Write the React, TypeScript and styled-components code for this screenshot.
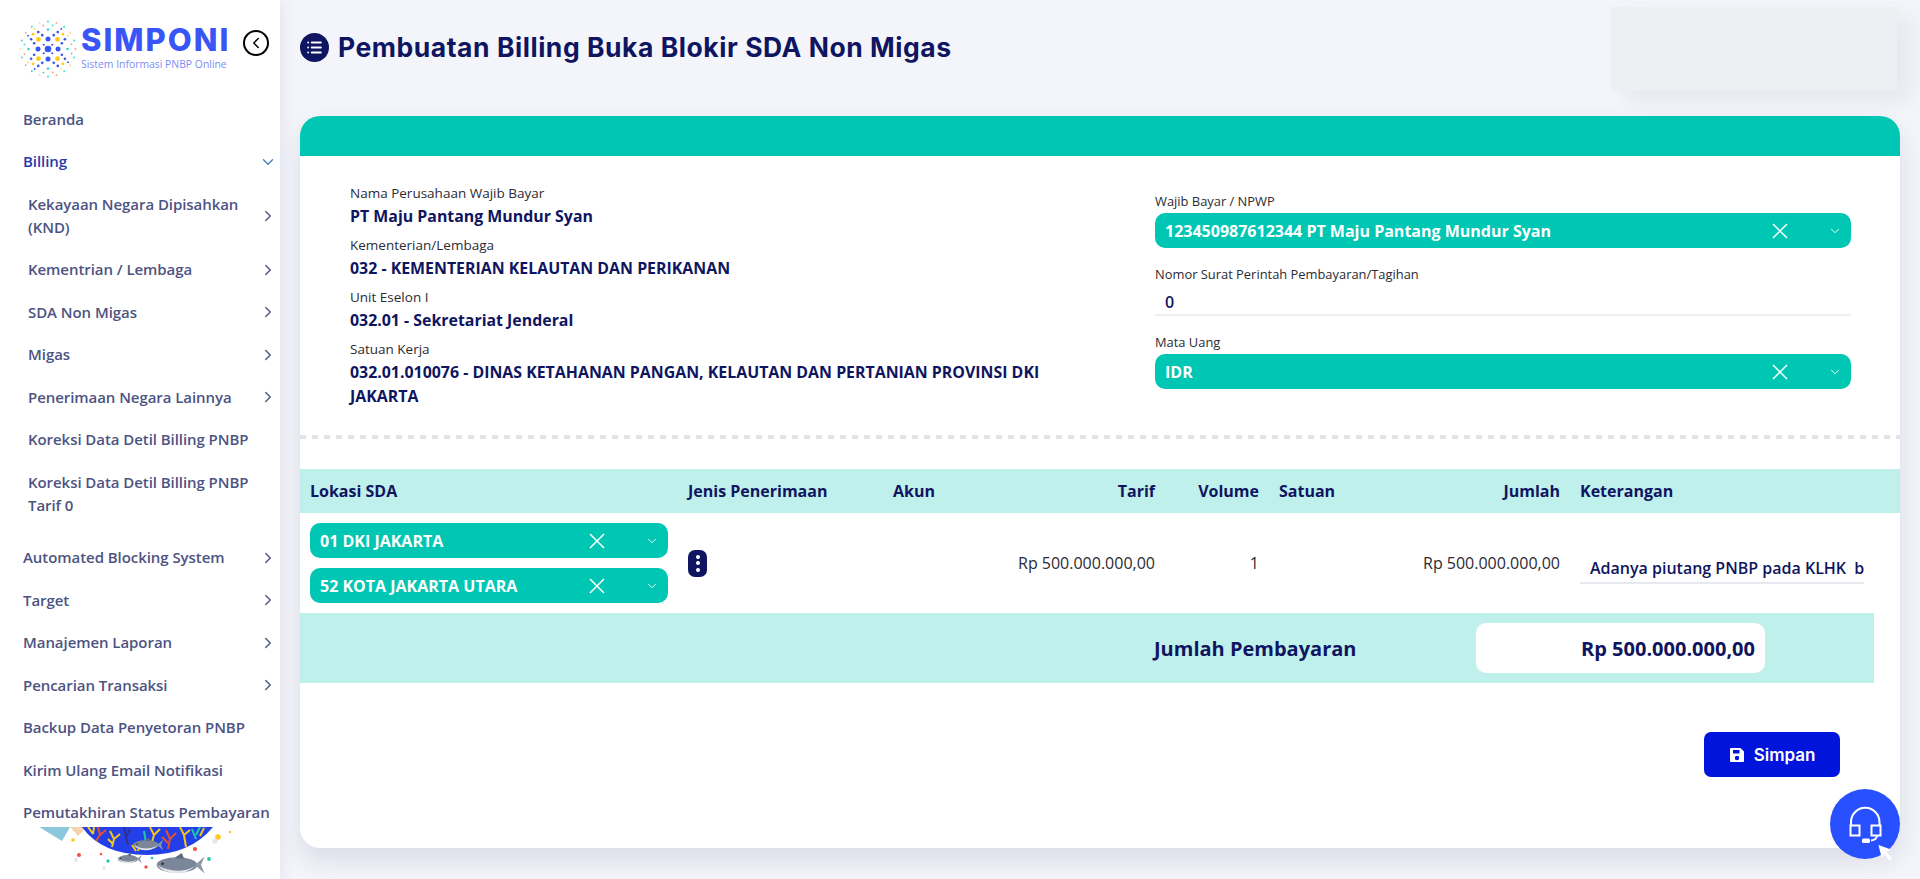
import { ChevronDown, ChevronLeft, ChevronRight, List } from "lucide-react";
import styled, { createGlobalStyle } from "styled-components";

interface MenuI {
  title: string;
  sub?: boolean;
  arrow?: boolean;
}

const subMenus: MenuI[] = [
  { title: "Kekayaan Negara Dipisahkan (KND)", sub: true, arrow: true },
  { title: "Kementrian / Lembaga", sub: true, arrow: true },
  { title: "SDA Non Migas", sub: true, arrow: true },
  { title: "Migas", sub: true, arrow: true },
  { title: "Penerimaan Negara Lainnya", sub: true, arrow: true },
  { title: "Koreksi Data Detil Billing PNBP", sub: true },
  { title: "Koreksi Data Detil Billing PNBP Tarif 0", sub: true },
];

const menus: MenuI[] = [
  { title: "Automated Blocking System", arrow: true },
  { title: "Target", arrow: true },
  { title: "Manajemen Laporan", arrow: true },
  { title: "Pencarian Transaksi", arrow: true },
  { title: "Backup Data Penyetoran PNBP" },
  { title: "Kirim Ulang Email Notifikasi" },
  { title: "Pemutakhiran Status Pembayaran" },
];

const infos = [
  { label: "Nama Perusahaan Wajib Bayar", value: "PT Maju Pantang Mundur Syan" },
  { label: "Kementerian/Lembaga", value: "032 - KEMENTERIAN KELAUTAN DAN PERIKANAN" },
  { label: "Unit Eselon I", value: "032.01 - Sekretariat Jenderal" },
  {
    label: "Satuan Kerja",
    value: "032.01.010076 - DINAS KETAHANAN PANGAN, KELAUTAN DAN PERTANIAN PROVINSI DKI JAKARTA",
  },
];

// dots of the logo, ring by ring
const logoDots = (() => {
  const dots: { x: number; y: number; r: number; fill: string }[] = [
    { x: 30, y: 30, r: 3.3, fill: "#3a55f6" },
  ];
  const rings = [
    { radius: 6, count: 4, r: 1.1, offset: 45, colors: ["#3a55f6"] },
    { radius: 10, count: 4, r: 2.5, offset: 0, colors: ["#3a55f6"] },
    { radius: 13.5, count: 4, r: 2.4, offset: 45, colors: ["#ffc91f"] },
    { radius: 15, count: 8, r: 1.3, offset: 22.5, colors: ["#3a55f6"] },
    { radius: 19.5, count: 12, r: 1.3, offset: 0, colors: ["#35d6c2", "#3a55f6", "#3a55f6"] },
    { radius: 21, count: 4, r: 1.4, offset: 45, colors: ["#ffc91f"] },
    { radius: 24, count: 16, r: 0.9, offset: 11, colors: ["#35d6c2", "#3a55f6", "#ffd65c", "#f59a86"] },
    { radius: 27.5, count: 20, r: 0.9, offset: 0, colors: ["#f59a86", "#35d6c2", "#ffd98a", "#35d6c2"] },
  ];
  rings.forEach((ring) => {
    for (let i = 0; i < ring.count; i++) {
      const angle = (i / ring.count) * Math.PI * 2 + (ring.offset * Math.PI) / 180;
      dots.push({
        x: 30 + Math.cos(angle) * ring.radius,
        y: 30 + Math.sin(angle) * ring.radius,
        r: ring.r,
        fill: ring.colors[i % ring.colors.length],
      });
    }
  });
  return dots;
})();

const LogoMark = () => (
  <svg width="60" height="60" viewBox="0 0 60 60">
    {logoDots.map((d, index) => (
      <circle key={index} cx={d.x} cy={d.y} r={d.r} fill={d.fill} />
    ))}
  </svg>
);

const Fish = ({ x, y, w }: { x: number; y: number; w: number }) => (
  <g transform={`translate(${x} ${y}) scale(${w / 40})`}>
    <ellipse cx="0" cy="0" rx="17" ry="6.5" fill="#7b8798" />
    <path d="M-17 0 Q0 9 15 1 Q8 7 0 7 Q-10 7 -17 0Z" fill="#e3e6ea" />
    <path d="M15 0 L23 -7 L20 0 L23 7Z" fill="#8d9aa8" />
    <path d="M-2 -6 L4 -10 L6 -5Z" fill="#5f6b7c" />
    <circle cx="-12" cy="-1" r="1" fill="#1c2230" />
  </g>
);

const SeaArt = () => (
  <svg width="200" height="52" viewBox="0 0 200 52">
    <path d="M-1 0 H30 L22 14Z" fill="#8cc8dc" />
    <path d="M30 0 H47 L38 9Z" fill="#f5d5b0" />
    <path d="M42 0 H173 Q150 28 107 28 Q62 28 42 0Z" fill="#2340e8" />
    <g fill="none" strokeWidth="2">
      <path d="M48 0 L53 7 M54 0 L53 7" stroke="#f5c518" />
      <path d="M58 0 L60 8 L66 3 M60 8 L56 14" stroke="#e8502c" />
      <path d="M70 4 L74 12 L80 7 M74 12 L72 20 M68 12 L73 17" stroke="#f5c518" />
      <path d="M84 0 L86 10 M90 2 L86 10 L88 18" stroke="#2f2f8f" />
      <path d="M92 18 L96 24 M100 16 L98 24" stroke="#f5c518" />
      <path d="M104 4 L106 16" stroke="#20c8a8" />
      <path d="M110 0 L114 8 L120 2 M114 8 L112 15" stroke="#f5c518" />
      <path d="M126 3 L130 12 L136 6 M130 12 L128 22 M122 10 L128 16" stroke="#e8502c" />
      <path d="M140 0 L144 8 L150 3 M144 8 L146 20" stroke="#f5c518" />
      <path d="M152 2 L156 12 M160 0 L156 8" stroke="#20c8a8" />
      <path d="M164 1 L160 9" stroke="#f5c518" />
    </g>
    <Fish x={106} y={18} w={30} />
    <Fish x={88} y={32} w={24} />
    <Fish x={137} y={38} w={48} />
    <circle cx="178" cy="10" r="2.8" fill="#ffc91f" />
    <circle cx="190" cy="5" r="1.3" fill="#ffc91f" />
    <circle cx="33" cy="13" r="1.8" fill="#ffc91f" />
    <circle cx="39" cy="28" r="2" fill="#f0503c" />
    <circle cx="68" cy="34" r="1.7" fill="#20c8a8" />
    <circle cx="155" cy="22" r="2" fill="#f0503c" />
    <circle cx="106" cy="40" r="1.7" fill="#f0503c" />
    <circle cx="169" cy="32" r="1.9" fill="#20c8a8" />
    <circle cx="61" cy="27" r="1.2" fill="#f0503c" />
    <circle cx="112" cy="31" r="1.3" fill="#20c8a8" />
    <circle cx="175" cy="14" r="2.6" fill="#e3e5ea" />
    <circle cx="36" cy="33" r="1.9" fill="#e3e5ea" />
    <circle cx="64" cy="41" r="1.7" fill="#e3e5ea" />
  </svg>
);

const Cross = () => (
  <CrossIcon viewBox="0 0 16 16">
    <path d="M1 1 L15 15 M15 1 L1 15" stroke="#fff" strokeWidth="1.5" fill="none" />
  </CrossIcon>
);

const SelectBox = ({ value }: { value: string }) => (
  <Select>
    <span>{value}</span>
    <Cross />
    <ChevronDown size={14} color="#fff" strokeWidth={1.6} />
  </Select>
);

const NavRow = ({ title, sub, arrow }: MenuI) => (
  <NavItem $sub={sub}>
    <span>{title}</span>
    {arrow && <ChevronRight size={18} color="#4d5382" strokeWidth={1.8} />}
  </NavItem>
);

const App = () => {
  return (
    <Page>
      <GlobalStyle />
      <Sidebar>
        <Brand>
          <LogoMark />
          <BrandText>
            <BrandName>SIMPONI</BrandName>
            <BrandSub>Sistem Informasi PNBP Online</BrandSub>
          </BrandText>
          <CollapseButton>
            <ChevronLeft size={18} color="#000" strokeWidth={2} />
          </CollapseButton>
        </Brand>
        <Nav>
          <NavItem>
            <span>Beranda</span>
          </NavItem>
          <NavItem $active>
            <span>Billing</span>
            <ChevronDown size={18} color="#3f7fc4" strokeWidth={1.8} />
          </NavItem>
          <SubGroup>
            {subMenus.map((m) => (
              <NavRow key={m.title} {...m} />
            ))}
          </SubGroup>
          {menus.map((m) => (
            <NavRow key={m.title} {...m} />
          ))}
        </Nav>
        <Art>
          <SeaArt />
        </Art>
      </Sidebar>

      <Main>
        <Header>
          <TitleGroup>
            <TitleIcon>
              <List size={17} color="#fff" strokeWidth={2.6} />
            </TitleIcon>
            <Title>Pembuatan Billing Buka Blokir SDA Non Migas</Title>
          </TitleGroup>
          <ProfileBlur />
        </Header>

        <Card>
          <CardTop />
          <InfoSection>
            <InfoList>
              {infos.map((info) => (
                <InfoGroup key={info.label}>
                  <Label>{info.label}</Label>
                  <Value>{info.value}</Value>
                </InfoGroup>
              ))}
            </InfoList>
            <FormList>
              <FormField>
                <Label $small>Wajib Bayar / NPWP</Label>
                <SelectBox value="123450987612344 PT Maju Pantang Mundur Syan" />
              </FormField>
              <FormField>
                <Label $small>Nomor Surat Perintah Pembayaran/Tagihan</Label>
                <TextField>0</TextField>
              </FormField>
              <FormField>
                <Label $small>Mata Uang</Label>
                <SelectBox value="IDR" />
              </FormField>
            </FormList>
          </InfoSection>

          <Dashed />

          <TableHead>
            <HeadCell>Lokasi SDA</HeadCell>
            <HeadCell>Jenis Penerimaan</HeadCell>
            <HeadCell>Akun</HeadCell>
            <HeadCell $right>Tarif</HeadCell>
            <HeadCell $right>Volume</HeadCell>
            <HeadCell>Satuan</HeadCell>
            <HeadCell $right>Jumlah</HeadCell>
            <HeadCell>Keterangan</HeadCell>
          </TableHead>
          <TableRow>
            <LocationCell>
              <SelectBox value="01 DKI JAKARTA" />
              <SelectBox value="52 KOTA JAKARTA UTARA" />
            </LocationCell>
            <Cell>
              <KebabButton>
                <i />
                <i />
                <i />
              </KebabButton>
            </Cell>
            <Cell />
            <Cell $right>Rp 500.000.000,00</Cell>
            <Cell $right>1</Cell>
            <Cell />
            <Cell $right>Rp 500.000.000,00</Cell>
            <Cell>
              <NoteField>Adanya piutang PNBP pada KLHK  berdasarkan surat</NoteField>
            </Cell>
          </TableRow>
          <TotalRow>
            <TotalLabel>Jumlah Pembayaran</TotalLabel>
            <TotalValue>Rp 500.000.000,00</TotalValue>
          </TotalRow>

          <Actions>
            <SaveButton>
              <svg width="16" height="16" viewBox="0 0 16 16">
                <path
                  fillRule="evenodd"
                  fill="#fff"
                  d="M2 1 H11.5 L15 4.5 V14 A1 1 0 0 1 14 15 H2 A1 1 0 0 1 1 14 V2 A1 1 0 0 1 2 1Z M4 3 V6.5 H10.5 V3Z M8 8.8 A2.2 2.2 0 1 0 8 13.2 A2.2 2.2 0 1 0 8 8.8Z"
                />
              </svg>
              Simpan
            </SaveButton>
          </Actions>
        </Card>
      </Main>

      <HelpButton>
        <svg width="70" height="70" viewBox="0 0 70 70" fill="none" stroke="#fff" strokeWidth="2">
          <path d="M21 37 V33 A14 14 0 0 1 49.5 33 V37" />
          <rect x="20.5" y="36.5" width="9" height="10" />
          <rect x="41.5" y="36.5" width="9" height="10" />
          <path d="M47 46.5 Q46.5 51 41 51.5" />
          <rect x="32" y="49.5" width="8" height="4.5" rx="1.5" fill="#fff" stroke="none" />
          <path d="M48.5 56 L61 60.5 L56.5 63 L62 69 L59.5 71.5 L54 65 L52 70Z" fill="#fff" stroke="none" />
        </svg>
      </HelpButton>
    </Page>
  );
};

export default App;

const GlobalStyle = createGlobalStyle`
  html, body {
    margin: 0;
    padding: 0;
    height: 100%;
    overflow: hidden;
    background: #f4f5fa;
    font-family: "Open Sans", "Liberation Sans", sans-serif;
  }

  * {
    box-sizing: border-box;
  }
`;

const Page = styled.div`
  display: flex;
  height: 879px;
  overflow: hidden;
`;

const Sidebar = styled.aside`
  display: flex;
  flex-direction: column;
  flex: 0 0 280px;
  height: 100%;
  background-color: white;
  box-shadow: 2px 0 14px rgba(30, 40, 90, 0.08);
  z-index: 2;
`;

const Brand = styled.div`
  display: flex;
  align-items: flex-start;
  flex: 0 0 98px;
  padding: 19px 0 0 18px;
`;

const BrandText = styled.div`
  display: flex;
  flex-direction: column;
  margin-left: 3px;
  padding-top: 5px;
  width: 153px;
`;

const BrandName = styled.div`
  font-family: "Inter", sans-serif;
  font-size: 31px;
  line-height: 32px;
  font-weight: 800;
  color: #3a55f6;
  letter-spacing: 2px;
`;

const BrandSub = styled.div`
  font-size: 10.4px;
  line-height: 15px;
  color: #7d8df5;
  white-space: nowrap;
  margin-top: 1px;
`;

const CollapseButton = styled.div`
  display: flex;
  align-items: center;
  justify-content: center;
  width: 26px;
  height: 26px;
  margin: 11px 0 0 9px;
  border: 2px solid #000;
  border-radius: 50%;
`;

const Nav = styled.nav`
  flex: 1;
  overflow: hidden;
`;

const SubGroup = styled.div`
  margin-bottom: 10px;
`;

const NavItem = styled.div<{ $sub?: boolean; $active?: boolean }>`
  display: flex;
  align-items: center;
  justify-content: space-between;
  padding: 9.75px 0 9.75px ${(p) => (p.$sub ? "28px" : "23px")};
  width: 279px;
  font-size: 15px;
  line-height: 23px;
  font-weight: 600;
  letter-spacing: -0.06px;
  color: ${(p) => (p.$active ? "#2a3aa8" : "#4d5382")};

  span {
    max-width: ${(p) => (p.$sub ? "226px" : "250px")};
    white-space: normal;
  }

  svg {
    flex: none;
    margin-right: 2px;
  }
`;

const Art = styled.div`
  flex: 0 0 52px;
  padding-left: 40px;
  overflow: hidden;
`;

const Main = styled.main`
  flex: 1;
  min-width: 0;
  padding: 0 20px;
`;

const Header = styled.header`
  display: flex;
  justify-content: space-between;
  height: 116px;
  padding-right: 3px;
`;

const TitleGroup = styled.div`
  display: flex;
  align-items: center;
  gap: 9px;
  height: 94px;
`;

const TitleIcon = styled.div`
  display: flex;
  align-items: center;
  justify-content: center;
  width: 29px;
  height: 29px;
  background-color: #0f1560;
  border-radius: 50%;
`;

const Title = styled.h1`
  margin: 0;
  font-family: "Inter", sans-serif;
  font-size: 26.5px;
  font-weight: 700;
  letter-spacing: 0.54px;
  color: #0f1560;
`;

const ProfileBlur = styled.div`
  width: 286px;
  height: 84px;
  margin-top: 7px;
  background-color: #eeeff3;
  box-shadow: 14px 10px 20px rgba(30, 40, 90, 0.06);
`;

const Card = styled.section`
  display: flex;
  flex-direction: column;
  height: 732px;
  background-color: white;
  border-radius: 20px;
  box-shadow: 0 12px 24px rgba(30, 40, 90, 0.12);
  overflow: hidden;
`;

const CardTop = styled.div`
  flex: 0 0 40px;
  background-color: #00c7b3;
`;

const InfoSection = styled.div`
  display: grid;
  grid-template-columns: 805px 696px;
  padding: 26px 0 0 50px;
  flex: 0 0 279px;
`;

const InfoList = styled.div`
  display: flex;
  flex-direction: column;
  gap: 6px;
  padding-right: 100px;
`;

const InfoGroup = styled.div``;

const Label = styled.div<{ $small?: boolean }>`
  font-size: ${(p) => (p.$small ? "12.9px" : "13.5px")};
  line-height: 22px;
  color: #2b2b33;
`;

const Value = styled.div`
  font-size: 15.9px;
  line-height: 24px;
  font-weight: 700;
  color: #0f1560;
`;

const FormList = styled.div`
  display: flex;
  flex-direction: column;
  gap: 15px;
  margin-top: 8px;
`;

const FormField = styled.div`
  display: flex;
  flex-direction: column;
  gap: 1px;
`;

const Select = styled.div`
  display: flex;
  align-items: center;
  height: 35px;
  padding: 0 9px 0 10px;
  background-color: #00c7b3;
  border-radius: 10px;
  color: white;
  font-size: 16px;
  font-weight: 700;

  span {
    flex: 1;
    white-space: nowrap;
  }
`;

const CrossIcon = styled.svg`
  width: 16px;
  height: 16px;
  margin-right: 40px;
`;

const TextField = styled.div`
  height: 30px;
  padding: 4px 10px 0;
  border-bottom: 2px solid #eceef2;
  font-size: 16px;
  line-height: 24px;
  font-weight: 600;
  color: #0f1560;
`;

const Dashed = styled.div`
  flex: 0 0 4px;
  background-image: repeating-linear-gradient(
    to right,
    #e2e3e7 0,
    #e2e3e7 6px,
    transparent 6px,
    transparent 12px
  );
  margin-bottom: 30px;
`;

const tableColumns = "378px 205px 120px 162px 104px 120px 181px 304px";

const TableHead = styled.div`
  display: grid;
  grid-template-columns: ${tableColumns};
  flex: 0 0 44px;
  background-color: #bff0eb;
`;

const HeadCell = styled.div<{ $right?: boolean }>`
  display: flex;
  align-items: center;
  justify-content: ${(p) => (p.$right ? "flex-end" : "flex-start")};
  padding: 0 10px;
  font-size: 16px;
  font-weight: 700;
  color: #0f1560;
`;

const TableRow = styled.div`
  display: grid;
  grid-template-columns: ${tableColumns};
  flex: 0 0 100px;
`;

const LocationCell = styled.div`
  display: flex;
  flex-direction: column;
  gap: 10px;
  padding: 10px;
`;

const Cell = styled.div<{ $right?: boolean }>`
  display: flex;
  align-items: center;
  justify-content: ${(p) => (p.$right ? "flex-end" : "flex-start")};
  padding: 0 10px;
  font-size: 16px;
  color: #2b2b33;
  min-width: 0;
`;

const KebabButton = styled.div`
  display: flex;
  flex-direction: column;
  align-items: center;
  justify-content: center;
  gap: 2.5px;
  width: 19px;
  height: 27px;
  background-color: #0f1560;
  border-radius: 7px;

  i {
    display: block;
    width: 4px;
    height: 4px;
    background-color: white;
    border-radius: 50%;
  }
`;

const NoteField = styled.div`
  width: 100%;
  height: 32px;
  padding: 4px 1px 0 10px;
  border-bottom: 2px solid #e8e9f0;
  font-size: 16px;
  line-height: 24px;
  font-weight: 600;
  color: #0f1560;
  white-space: pre;
  overflow: hidden;
  margin-top: 9px;
`;

const TotalRow = styled.div`
  display: grid;
  grid-template-columns: 854px 322px 289px;
  grid-template-areas: ". label value";
  align-items: center;
  flex: 0 0 70px;
  width: 1574px;
  background-color: #bff0eb;
`;

const TotalLabel = styled.div`
  grid-area: label;
  font-size: 20px;
  font-weight: 700;
  color: #0f1560;
`;

const TotalValue = styled.div`
  grid-area: value;
  display: flex;
  align-items: center;
  justify-content: flex-end;
  height: 50px;
  padding-right: 10px;
  background-color: white;
  border-radius: 10px;
  font-size: 20px;
  font-weight: 700;
  color: #0f1560;
`;

const Actions = styled.div`
  display: flex;
  justify-content: flex-end;
  padding: 49px 60px 0 0;
`;

const SaveButton = styled.button`
  display: flex;
  align-items: center;
  justify-content: center;
  gap: 9px;
  width: 136px;
  height: 45px;
  border: none;
  background-color: #0014dc;
  border-radius: 7px;
  color: white;
  font-family: "Inter", sans-serif;
  font-size: 17px;
  font-weight: 600;
`;

const HelpButton = styled.div`
  position: absolute;
  left: 1830px;
  top: 789px;
  width: 70px;
  height: 70px;
  background-color: #2850ff;
  border-radius: 50%;
  z-index: 3;

  svg {
    overflow: visible;
  }
`;
